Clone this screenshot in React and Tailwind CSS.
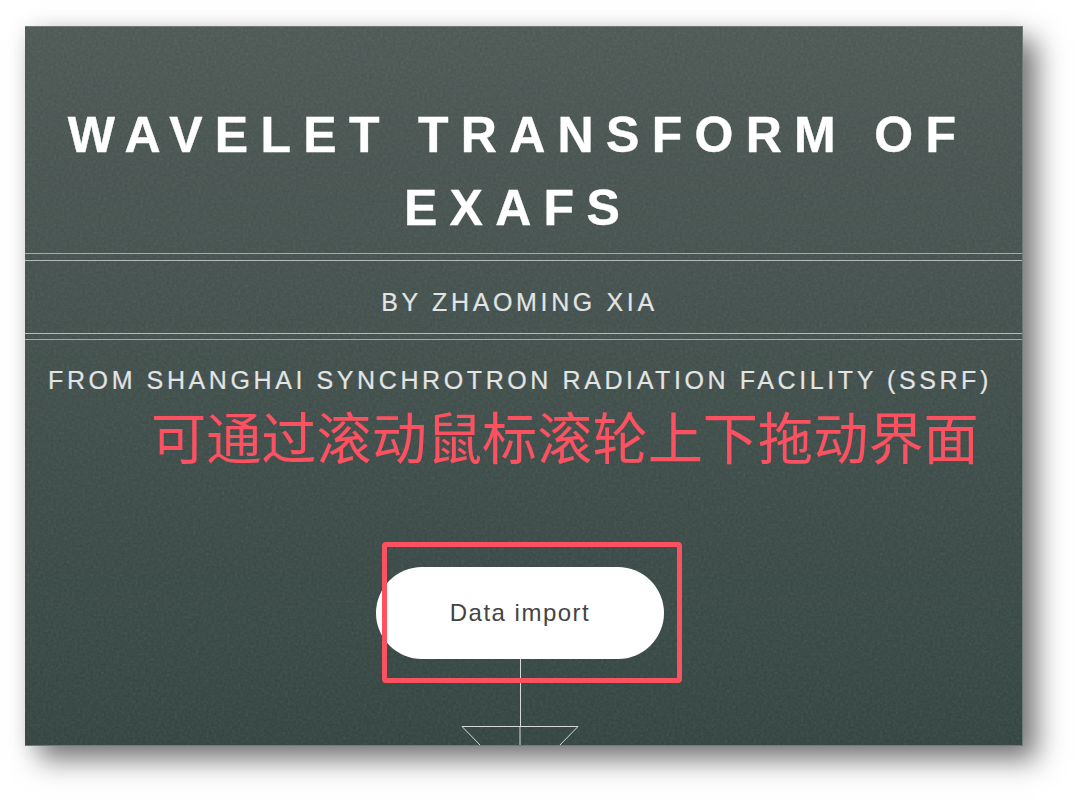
import React from 'react';

const sans = "font-['Liberation_Sans',Arial,sans-serif]";

function Grain() {
    // fine paper-like noise on top of the panel gradient
    return (
        <svg className="absolute inset-0 w-full h-full pointer-events-none opacity-[0.12]">
            <filter id="grain">
                <feTurbulence type="fractalNoise" baseFrequency="0.38" numOctaves="2" seed="4" />
                <feColorMatrix type="saturate" values="0" />
            </filter>
            <rect width="100%" height="100%" filter="url(#grain)" />
        </svg>
    );
}

export default function App() {
    return (
        <div className={`relative w-[1080px] h-[805px] bg-white overflow-hidden pt-[26px] pl-[25px] ${sans}`}>
            <div className="relative w-[998px] h-[720px] overflow-hidden bg-gradient-to-b from-[#4b5653] to-[#31433f] border border-[#6f7977] border-l-0 shadow-[14px_14px_26px_rgba(0,0,0,0.52),0_0_18px_rgba(0,0,0,0.08)]">
                <Grain />
                <div className="relative flex flex-col items-center pt-[72px]">
                    <h1 className="w-full pl-[24px] pr-[35px] text-center text-[50px] leading-[73px] font-bold tracking-[12.3px] text-white [-webkit-text-stroke:0.4px_white]">
                        WAVELET TRANSFORM OF EXAFS
                    </h1>
                    <div className="w-full mt-[8px] border-y border-[#a4aaa8] pt-[6px] pb-[5px]">
                        <div className="h-[74px] pt-[11px] pr-[8px] flex items-center justify-center border-y border-[#b5bab8] text-[25px] tracking-[3.65px] text-[#e2e5e4] [-webkit-text-stroke:0.2px_#e2e5e4]">
                            BY ZHAOMING XIA
                        </div>
                    </div>
                    <p className="w-full mt-[25px] pr-[7px] text-center text-[25px] leading-[30px] tracking-[3.6px] text-[#e2e5e4] whitespace-nowrap [-webkit-text-stroke:0.2px_#e2e5e4]">
                        FROM SHANGHAI SYNCHROTRON RADIATION FACILITY (SSRF)
                    </p>
                    <div className="mt-[172px] mr-[7px] w-[288px] h-[92px] rounded-full bg-white flex items-center justify-center text-[24px] tracking-[1.5px] text-[#444444]">
                        Data import
                    </div>
                    <div className="mr-[7px] w-px h-[68px] bg-[#d5d9d8]" />
                    <svg width="118" height="20" className="-mt-[1px] mr-[7px]" viewBox="0 0 118 20" fill="none" stroke="#d5d9d8" strokeWidth="1">
                        <path d="M1 .5H117L98 20M1 .5L20 20" />
                        <path d="M59 0V20" />
                    </svg>
                </div>
                {/* annotations added on top of the screenshot */}
                <span className="absolute left-[126px] top-[373px] text-[55.2px] leading-[70px] whitespace-nowrap text-[#fb5160] font-['Noto_Sans_CJK_SC','Liberation_Sans',sans-serif]">
                    可通过滚动鼠标滚轮上下拖动界面
                </span>
                <div className="absolute left-[357px] top-[515px] w-[300px] h-[141px] border-[5px] border-[#fb5160] rounded-[4px]" />
            </div>
        </div>
    );
}
